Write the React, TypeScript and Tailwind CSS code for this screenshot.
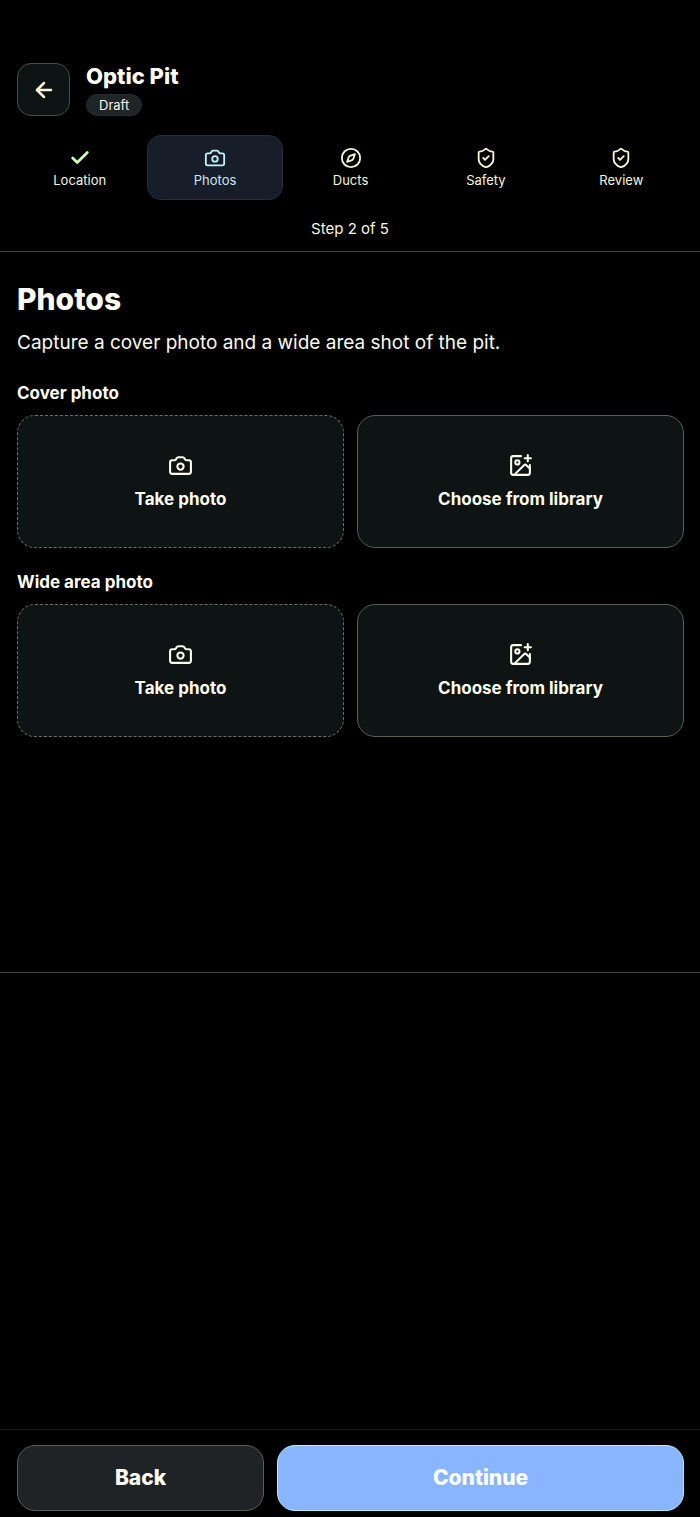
import { ArrowLeft, Camera, Check, Compass, ImagePlus, ShieldCheck } from "lucide-react";
import type { LucideIcon } from "lucide-react";

type Step = {
  label: string;
  icon: LucideIcon;
  state: "done" | "current" | "todo";
};

const steps: Step[] = [
  { label: "Location", icon: Check, state: "done" },
  { label: "Photos", icon: Camera, state: "current" },
  { label: "Ducts", icon: Compass, state: "todo" },
  { label: "Safety", icon: ShieldCheck, state: "todo" },
  { label: "Review", icon: ShieldCheck, state: "todo" },
];

const stepStyles = {
  done: "border-transparent text-[#f4f8e0]",
  current: "border-[#20303c] bg-[#171e29] text-[#c9e8f8]",
  todo: "border-transparent text-[#f6f6da]",
};

const iconStyles = {
  done: "text-[#ccffb4]",
  current: "text-[#c4effc]",
  todo: "text-[#f6f6d4]",
};

function StepTab({ step }: { step: Step }) {
  const Icon = step.icon;
  return (
    <button
      type="button"
      aria-current={step.state === "current" ? "step" : undefined}
      className={`flex flex-1 flex-col items-center gap-[2px] rounded-[14px] border pt-[11px] pb-[10px] ${stepStyles[step.state]}`}
    >
      <Icon
        strokeWidth={step.state === "done" ? 3 : 2}
        className={`size-[22px] ${iconStyles[step.state]}`}
      />
      <span className="text-[13px] leading-[18px]">{step.label}</span>
    </button>
  );
}

function PhotoPicker({ title }: { title: string }) {
  return (
    <section>
      <h2 className="text-[17px] leading-6 font-bold text-[#fffff4]">{title}</h2>
      <div className="mt-[10px] grid grid-cols-2 gap-[13px] text-[17px] leading-6 font-bold text-[#fcfcec]">
        <button
          type="button"
          className="flex h-[133px] flex-col items-center justify-center gap-[9px] rounded-[18px] border border-dashed border-[#6c6f5a] bg-[#0e1314]"
        >
          <Camera className="size-[25px]" />
          Take photo
        </button>
        <button
          type="button"
          className="flex h-[133px] flex-col items-center justify-center gap-[9px] rounded-[18px] border border-[#5c5f4c] bg-[#0e1314]"
        >
          <ImagePlus className="size-[25px]" />
          Choose from library
        </button>
      </div>
    </section>
  );
}

export default function App() {
  return (
    <div className="flex min-h-screen flex-col bg-black font-['Inter',sans-serif] text-[#fffff4]">
      <header className="border-b border-[#3f422f] pt-[63px] pb-[11px]">
        <div className="flex items-center gap-4 pr-4 pl-[17px]">
          <button
            type="button"
            aria-label="Go back"
            className="flex size-[53px] items-center justify-center rounded-[14px] border border-[#4a4d40] bg-[#0e1314] text-[#fff6d8]"
          >
            <ArrowLeft strokeWidth={2.5} className="size-6" />
          </button>
          <div className="flex flex-col items-start gap-[5px]">
            <h1 className="text-[22px] leading-[26px] font-extrabold">Optic Pit</h1>
            <span className="rounded-full border border-[#262b2e] bg-[#1f2426] px-3 text-[13px] leading-5 text-[#f8f6e8]">
              Draft
            </span>
          </div>
        </div>
        <nav aria-label="Steps" className="mt-[19px] flex pr-[11px] pl-3">
          {steps.map((step) => (
            <StepTab key={step.label} step={step} />
          ))}
        </nav>
        <p className="mt-[18px] text-center text-[15px] leading-[22px] text-[#f6f6e0]">Step 2 of 5</p>
      </header>

      <main className="border-b border-[#3f422f] pt-[27px] pr-4 pb-[235px] pl-[17px]">
        <h1 className="text-[30px] leading-10 font-extrabold">Photos</h1>
        <p className="mt-[10px] text-[19px] leading-7 text-[#fafaec]">
          Capture a cover photo and a wide area shot of the pit.
        </p>
        <div className="mt-6 flex flex-col gap-[22px]">
          <PhotoPicker title="Cover photo" />
          <PhotoPicker title="Wide area photo" />
        </div>
      </main>

      <footer className="mt-auto grid grid-cols-[17fr_28fr] gap-[13px] border-t border-[#1a1c12] pt-[15px] pr-4 pb-[6px] pl-[17px] text-[21px] leading-7 font-extrabold">
        <button
          type="button"
          className="rounded-[18px] border border-[#5c6052] bg-[#1f2326] py-[18px] text-[#fffff8]"
        >
          Back
        </button>
        <button
          type="button"
          className="rounded-[18px] border border-[#b4ecff] bg-[#89b5ff] py-[18px] text-white"
        >
          Continue
        </button>
      </footer>
    </div>
  );
}
